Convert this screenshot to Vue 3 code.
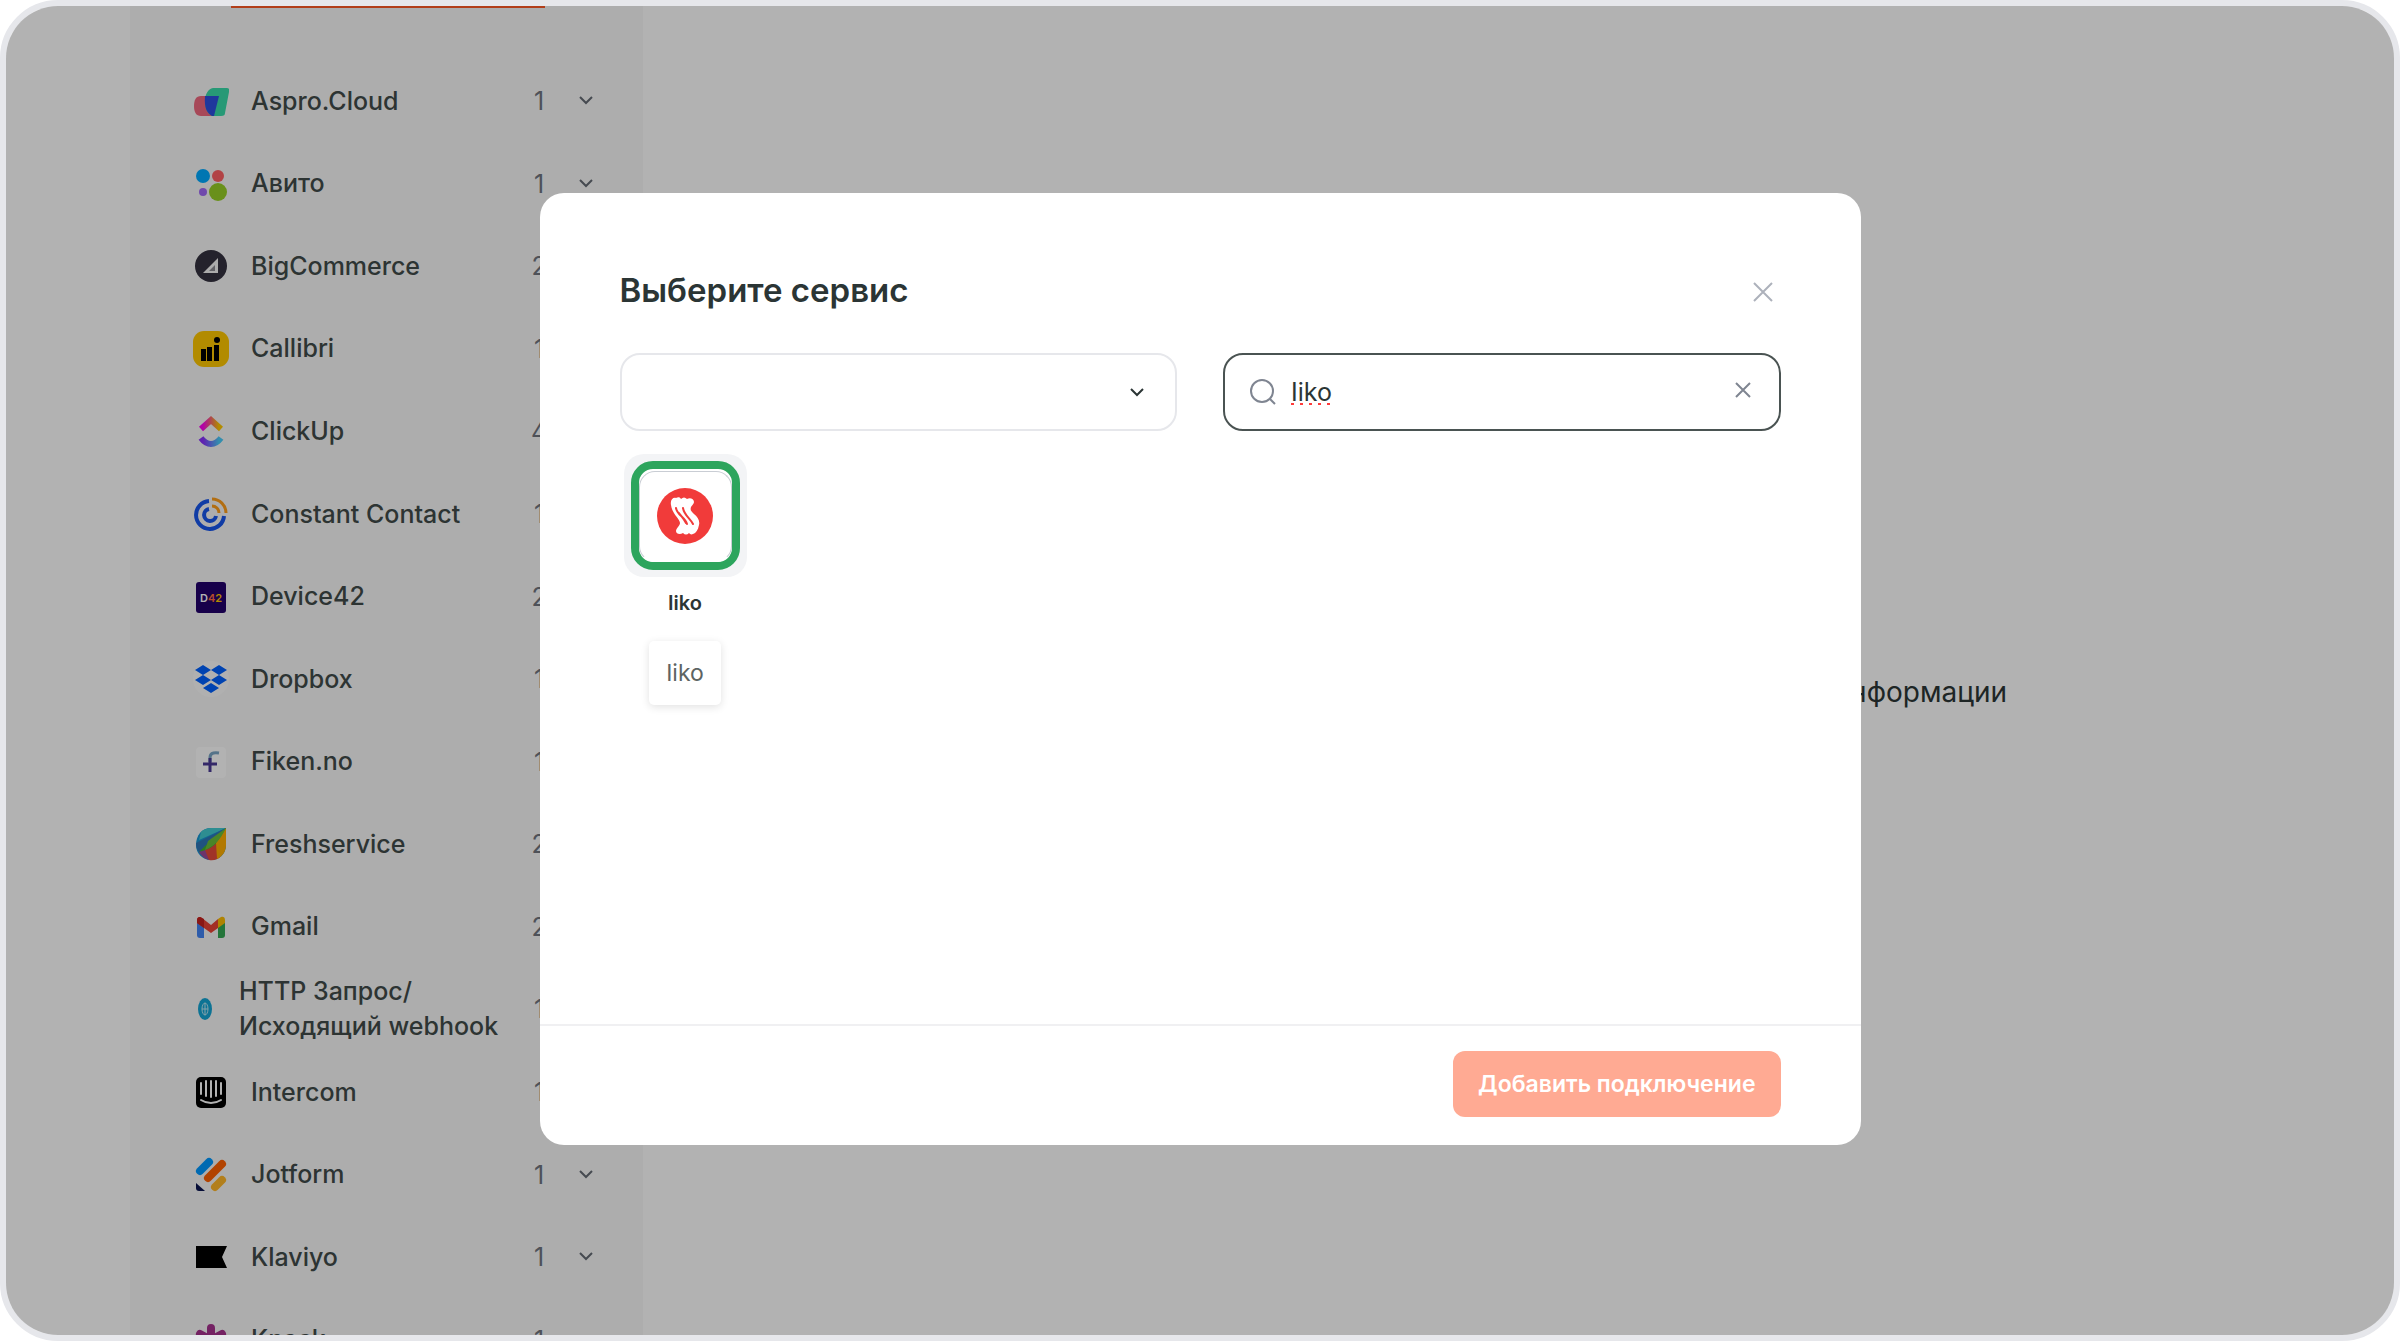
<script setup>
import { ref } from 'vue';

const services = [
  { id: 'aspro', name: 'Aspro.Cloud', count: 1 },
  { id: 'avito', name: 'Авито', count: 1 },
  { id: 'bigcommerce', name: 'BigCommerce', count: 2 },
  { id: 'callibri', name: 'Callibri', count: 1 },
  { id: 'clickup', name: 'ClickUp', count: 4 },
  { id: 'constant', name: 'Constant Contact', count: 1 },
  { id: 'device42', name: 'Device42', count: 2 },
  { id: 'dropbox', name: 'Dropbox', count: 1 },
  { id: 'fiken', name: 'Fiken.no', count: 1 },
  { id: 'freshservice', name: 'Freshservice', count: 2 },
  { id: 'gmail', name: 'Gmail', count: 2 },
  { id: 'http', name: 'HTTP Запрос/\nИсходящий webhook', count: 1, narrow: true },
  { id: 'intercom', name: 'Intercom', count: 1 },
  { id: 'jotform', name: 'Jotform', count: 1 },
  { id: 'klaviyo', name: 'Klaviyo', count: 1 },
  { id: 'knack', name: 'Knack', count: 1 },
];

const search = ref('Iiko');
const category = ref('');
</script>

<template>
  <div class="app">
    <aside class="sidebar">
      <div class="sidebar__add"></div>
      <ul class="sidebar__list">
        <li v-for="item in services" :key="item.id" class="service">
          <svg
            :class="['service__icon', { 'service__icon--narrow': item.narrow }]"
            :viewBox="item.narrow ? '0 0 24 36' : '0 0 36 36'"
            aria-hidden="true"
          >
            <g v-if="item.id === 'aspro'">
              <path d="M8 13h19l-4 20H8c-5 0-7-4-7-10s2-10 7-10z" fill="#f0687f" />
              <path d="M20 5h13c3 0 4 1 3 4l-4 21c0 2-1 3-4 3h-9c-5-3-7-8-7-14 0-8 3-13 8-14z" fill="#38dba9" />
              <path d="M12 13h14l-5 20h-2c-5-3-8-8-7-20z" fill="#2d4fe0" />
            </g>
            <g v-else-if="item.id === 'avito'">
              <circle cx="10" cy="10" r="7" fill="#00aaff" />
              <circle cx="25" cy="10" r="6" fill="#ff6163" />
              <circle cx="10" cy="26" r="4" fill="#a169f7" />
              <circle cx="25" cy="26" r="9" fill="#97cf26" />
            </g>
            <g v-else-if="item.id === 'bigcommerce'">
              <circle cx="18" cy="18" r="16" fill="#34313f" />
              <path d="M25 10v15H10z" fill="#f5f5f5" />
              <path d="M22 17v6h-6z" fill="#8d8b93" />
            </g>
            <g v-else-if="item.id === 'callibri'">
              <rect width="36" height="36" rx="11" fill="#ffc700" />
              <path d="M8 18h5v12H8zM14 16h5v14h-5zM21 14h5v16h-5z" fill="#000" />
              <circle cx="24" cy="9" r="3" fill="#000" />
            </g>
            <g v-else-if="item.id === 'clickup'" fill="none" stroke-width="6">
              <defs>
                <linearGradient id="cu-top" x1="0" x2="1">
                  <stop offset="0.1" stop-color="#ff02f0" />
                  <stop offset="0.5" stop-color="#f76b6b" />
                  <stop offset="0.9" stop-color="#ffc800" />
                </linearGradient>
                <linearGradient id="cu-bottom" x1="0" x2="1">
                  <stop offset="0.1" stop-color="#8930fd" />
                  <stop offset="0.9" stop-color="#49ccf9" />
                </linearGradient>
              </defs>
              <path d="M8 15L18 6l10 9" stroke="url(#cu-top)" />
              <path d="M8 24c6 8 14 8 20 0" stroke="url(#cu-bottom)" />
            </g>
            <g v-else-if="item.id === 'constant'" fill="none" stroke-width="4">
              <path d="M16 5a14 14 0 1 0 15 15" stroke="#1856ed" />
              <path d="M16 13a6 6 0 1 0 7 7" stroke="#1856ed" />
              <path d="M19 3a14 14 0 0 1 14 14M19 10a7 7 0 0 1 7 7" stroke="#ff9e1a" stroke-width="3" />
            </g>
            <g v-else-if="item.id === 'device42'">
              <rect x="3" y="3" width="30" height="31" rx="3" fill="#22006b" />
              <text x="7" y="23" class="d42" fill="#fff">
                D<tspan fill="#ff6b3d">4</tspan><tspan fill="#ffc400">2</tspan>
              </text>
            </g>
            <g v-else-if="item.id === 'dropbox'">
              <circle cx="18" cy="18" r="18" fill="#fdfdfd" />
              <path
                d="M10 4l8 5-8 5-8-5zM26 4l8 5-8 5-8-5zM10 14l8 5-8 5-8-5zM26 14l8 5-8 5-8-5zM18 22l8 5-8 5-8-5z"
                fill="#0061fe"
              />
            </g>
            <g v-else-if="item.id === 'fiken'" fill="none" stroke-width="4">
              <rect x="3" y="3" width="30" height="31" rx="4" fill="#fff" />
              <path d="M17 18v-4c0-4 2-6 9-5" stroke="#7aa5c4" stroke-width="3" />
              <path d="M17 14v14M10 20h14" stroke="#4b3a95" stroke-width="3" />
            </g>
            <g v-else-if="item.id === 'freshservice'">
              <path d="M18 2h15v17c0 9-7 15-15 15-9 0-15-7-15-15C3 9 9 2 18 2z" fill="#1897d4" />
              <path d="M8 6c3-3 7-4 10-4h15L6 14z" fill="#42cbd0" />
              <path d="M33 2L3 17c0 4 1 7 3 9l8-3z" fill="#2f76b8" />
              <path d="M33 2C27 17 20 24 6 26l6-6z" fill="#43b02a" />
              <path d="M6 26c3 5 7 8 12 8l1-12z" fill="#9b4a9a" />
              <path d="M33 2C27 15 20 22 12 24l4 10c5 1 9-1 11-3z" fill="#e5493a" />
              <path d="M33 2v17c0 6-3 11-9 14l-1-16z" fill="#ffae00" />
              <path d="M33 2C27 14 22 20 12 24l3-9z" fill="#6abf3a" />
            </g>
            <g v-else-if="item.id === 'gmail'">
              <path d="M4 12l7 5v12H7c-2 0-3-1-3-3z" fill="#4285f4" />
              <path d="M32 12l-7 5v12h4c2 0 3-1 3-3z" fill="#34a853" />
              <path d="M25 10l3-2c2-1 4 0 4 3v3l-7 5z" fill="#fbbc04" />
              <path d="M4 11c0-3 3-4 5-2l9 7 7-6v9l-7 5-7-5-7-5z" fill="#ea4335" />
              <path d="M4 11c0-3 3-4 5-2l2 1v9l-7-5z" fill="#c5221f" />
            </g>
            <g v-else-if="item.id === 'http'">
              <ellipse cx="12" cy="18" rx="7" ry="11" fill="#14a5d4" />
              <ellipse cx="12" cy="18" rx="3" ry="6" fill="none" stroke="#bfe9f5" stroke-width="1" />
              <path d="M12 12v12M9 18h6" stroke="#bfe9f5" stroke-width="1" />
            </g>
            <g v-else-if="item.id === 'intercom'" fill="none" stroke="#fff" stroke-width="2" stroke-linecap="round">
              <rect x="3" y="3" width="30" height="31" rx="5" fill="#000" stroke="none" />
              <path d="M8 9v11M13 7v15M18 7v16M23 7v15M28 9v11M8 26c6 4 14 4 20 0" />
            </g>
            <g v-else-if="item.id === 'jotform'" fill="none" stroke-width="8" stroke-linecap="round">
              <path d="M7 14l9-9" stroke="#0099ff" />
              <path d="M15 21L29 7" stroke="#ff6100" />
              <path d="M22 30l7-7" stroke="#ffb629" />
              <path d="M3 26l9 8H6c-2 0-3-1-3-3z" fill="#0a1551" />
            </g>
            <path v-else-if="item.id === 'klaviyo'" d="M3 7h31l-5 11 5 11H3z" />
            <g v-else fill="none" stroke="#a6328f" stroke-width="8" stroke-linecap="round">
              <path d="M18 6v24M7 12l22 12M29 12L7 24" />
            </g>
          </svg>
          <span class="service__name">{{ item.name }}</span>
          <span class="service__count">{{ item.count }}</span>
          <svg class="chevron" viewBox="0 0 14 10" aria-hidden="true"><path d="M1 1l6 6 6-6" /></svg>
        </li>
      </ul>
    </aside>

    <main class="main">
      <p class="main__hint">информации</p>
    </main>

    <div class="overlay">
      <section class="modal" role="dialog" aria-labelledby="modal-title">
        <div class="modal__body">
          <header class="modal__head">
            <h2 id="modal-title">Выберите сервис</h2>
            <button type="button" class="icon-button" aria-label="Закрыть">
              <svg class="close" viewBox="0 0 20 20"><path d="M1 1l18 18M19 1L1 19" /></svg>
            </button>
          </header>

          <div class="filters">
            <div class="field">
              <select v-model="category" class="field__select" aria-label="Категория">
                <option value=""></option>
              </select>
              <svg class="chevron chevron--dark" viewBox="0 0 14 10" aria-hidden="true"><path d="M1 2l6 6 6-6" /></svg>
            </div>
            <div class="field field--active">
              <svg class="search-icon" viewBox="0 0 28 28" aria-hidden="true">
                <circle cx="13" cy="13" r="11" />
                <path d="M21 21l5 5" />
              </svg>
              <input v-model="search" type="text" class="field__input" aria-label="Поиск" />
              <span v-if="search" class="field__spelling"></span>
              <button type="button" class="icon-button" aria-label="Очистить" @click="search = ''">
                <svg class="clear" viewBox="0 0 16 20"><path d="M1 1l14 14M15 1L1 15" /></svg>
              </button>
            </div>
          </div>

          <div class="result">
            <button type="button" class="result__tile" aria-label="Iiko">
              <span class="result__ring">
                <span class="result__card">
                  <svg class="result__logo" viewBox="-28 -28 56 56" aria-hidden="true">
                    <circle r="28" fill="#f13b3a" />
                    <path
                      d="M-14-11c-1-5 2-8 5-7 2-1 4-1 5 1 2-2 4-2 6 0 3-2 7 0 7 3 0 2-2 3-3 5-1 3 0 4 3 7 4 3 6 7 5 11-1 5-3 8-6 9-2 1-3 0-4-1-2 2-4 2-6 0-3 2-7 1-7-2 0-3 4-5 4-8 0-4-8-9-9-18z"
                      fill="#fff"
                    />
                    <path
                      d="M-9-8C-8-1 0 1 2 8M-2-8C-1-1 5 2 8 8M-6-3C-3 1-1 3 1 7"
                      fill="none"
                      stroke="#f13b3a"
                      stroke-width="2"
                      stroke-linecap="round"
                    />
                  </svg>
                </span>
              </span>
            </button>
            <span class="result__name">Iiko</span>
            <span class="result__tooltip" role="tooltip">Iiko</span>
          </div>
        </div>

        <footer class="modal__footer">
          <button type="button" class="submit" disabled>Добавить подключение</button>
        </footer>
      </section>
    </div>
  </div>
</template>

<style>
body {
  background: #fff;
}
</style>

<style scoped>
.app,
.app * {
  box-sizing: border-box;
}

.app {
  position: relative;
  display: flex;
  height: 100vh;
  overflow: hidden;
  padding-left: 124px;
  border: 6px solid #e6e7eb;
  border-radius: 58px;
  background: #fff;
  font-family: Inter, "Liberation Sans", sans-serif;
  font-size: 23px;
  color: #2b3535;
}

button,
input,
select {
  font: inherit;
}

.sidebar {
  display: flex;
  flex-direction: column;
  flex: 0 0 513px;
  background: #f8f8f8;
}

.sidebar__add {
  flex: none;
  height: 2px;
  margin: 0 98px 0 101px;
  background: #ff5a24;
}

.sidebar__list {
  display: grid;
  grid-auto-rows: 1fr;
  flex: 1;
  min-height: 0;
  margin: 52px 0 -46px;
  padding: 0 50px 0 63px;
  list-style: none;
}

.service {
  display: flex;
  align-items: center;
  min-height: 0;
}

.service__icon {
  flex: none;
  width: 36px;
  height: 36px;
  margin-right: 22px;
}

.service__icon--narrow {
  width: 24px;
}

.d42 {
  font-size: 11px;
  font-weight: 600;
}

.service__name {
  flex: 1;
  font-size: 25px;
  font-weight: 500;
  line-height: 35px;
  color: #414b4a;
  white-space: pre;
}

.service__count {
  width: 20px;
  margin-right: 30px;
  font-size: 25px;
  text-align: center;
  color: #70757f;
}

.chevron {
  flex: none;
  width: 14px;
  height: 10px;
  fill: none;
  stroke: #656b74;
  stroke-width: 2;
}

.chevron--dark {
  stroke: #2b3535;
}

.main {
  display: flex;
  flex: 1;
  align-items: center;
  justify-content: flex-end;
  padding: 42px 387px 0 0;
}

.main__hint {
  margin: 0;
  font-size: 28px;
  line-height: 40px;
}

.overlay {
  position: absolute;
  inset: 0;
  display: flex;
  align-items: center;
  justify-content: center;
  padding-bottom: 4px;
  background: rgba(0, 0, 0, 0.3);
}

.modal {
  display: flex;
  flex-direction: column;
  width: 1321px;
  max-width: 90%;
  border-radius: 24px;
  background: #fff;
}

.modal__body {
  min-height: 831px;
  padding: 77px 80px 0;
}

.modal__head {
  display: flex;
  align-items: flex-end;
  justify-content: space-between;
  padding-right: 8px;
}

.modal__head h2 {
  margin: 0;
  font-size: 33px;
  font-weight: 600;
  line-height: 40px;
}

.modal__head .icon-button {
  padding-bottom: 8px;
}

.icon-button {
  display: flex;
  padding: 0;
  border: 0;
  background: none;
  cursor: pointer;
}

.close,
.clear,
.search-icon {
  fill: none;
  stroke: #7f8591;
  stroke-width: 2;
}

.close {
  width: 20px;
  height: 20px;
  stroke: #adb1bb;
}

.clear {
  width: 16px;
  height: 20px;
}

.search-icon {
  flex: none;
  width: 28px;
  height: 28px;
}

.filters {
  display: grid;
  grid-template-columns: 1fr 1fr;
  gap: 46px;
  margin-top: 43px;
}

.field {
  position: relative;
  display: flex;
  align-items: center;
  height: 78px;
  padding: 0 31px 0 24px;
  border: 2px solid #e6e7eb;
  border-radius: 20px;
}

.field--active {
  gap: 14px;
  padding-right: 28px;
  border-color: #4a5352;
}

.field__select,
.field__input {
  flex: 1;
  min-width: 0;
  height: 100%;
  padding: 0;
  border: 0;
  outline: 0;
  background: none;
  color: inherit;
  appearance: none;
}

.field__input {
  font-size: 25px;
}

/* misspelling marker under the typed word */
.field__spelling {
  position: absolute;
  top: 48px;
  left: 66px;
  width: 40px;
  height: 2px;
  background: repeating-linear-gradient(90deg, #ff3b3b 0 3px, transparent 3px 9px);
}

.result {
  display: flex;
  flex-direction: column;
  align-items: center;
  width: 123px;
  margin: 23px 0 0 4px;
}

.result__tile {
  display: grid;
  padding: 7px;
  border: 0;
  border-radius: 20px;
  background: #f3f4f6;
  cursor: pointer;
}

.result__ring {
  width: 109px;
  height: 109px;
  padding-top: 2px;
  border: 8px solid #2da55d;
  border-radius: 22px;
  background: #fff;
}

.result__card {
  display: grid;
  place-items: center;
  height: 100%;
  border: 1px solid #c9cdd4;
  border-bottom-color: #fff;
  border-radius: 16px;
}

.result__logo {
  width: 56px;
  height: 56px;
}

.result__name {
  margin-top: 14px;
  font-size: 20px;
  font-weight: 600;
  line-height: 24px;
}

.result__tooltip {
  margin-top: 26px;
  padding: 16px 17px;
  border-radius: 5px;
  background: #fff;
  box-shadow: 0 2px 8px rgba(0, 0, 0, 0.12);
  font-size: 23px;
  line-height: 32px;
  color: #5d6463;
}

.modal__footer {
  display: flex;
  justify-content: flex-end;
  padding: 25px 80px 28px;
  border-top: 2px solid #f0f0f2;
}

.submit {
  height: 66px;
  padding: 0 25px;
  border: 0;
  border-radius: 12px;
  background: #ffaa93;
  font-weight: 600;
  color: #fff;
}
</style>
